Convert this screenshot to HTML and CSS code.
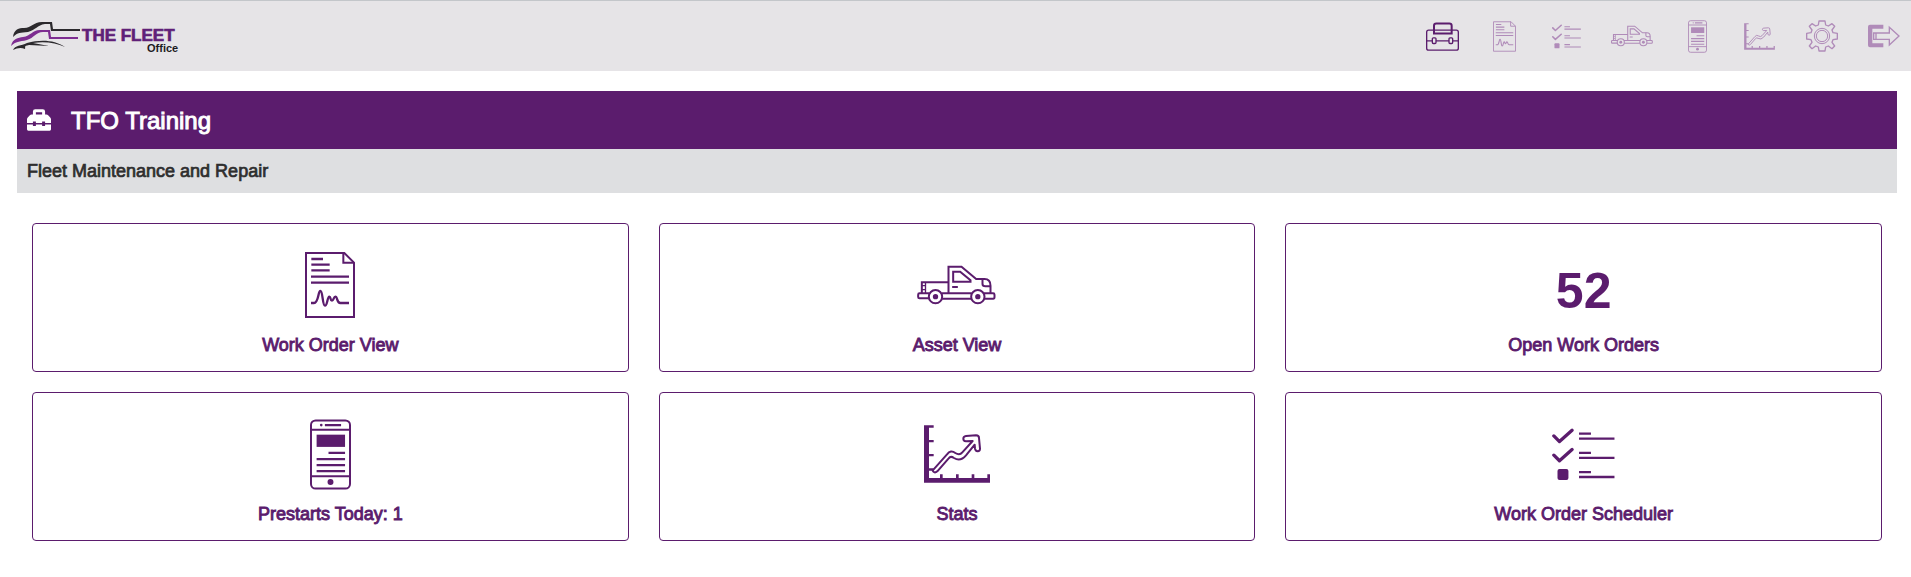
FILE: index.html
```html
<!DOCTYPE html>
<html lang="en">
<head>
<meta charset="utf-8">
<title>The Fleet Office</title>
<link rel="stylesheet" href="styles.css">
</head>
<body>
<svg class="sprite" aria-hidden="true">
  <symbol id="doc" viewBox="195 66 150 198">
    <g fill="none" stroke="currentColor" stroke-width="6">
      <path d="M198 69H313L342 98V261H198Z"/>
      <path d="M310 69V98H342" stroke-width="6"/>
      <path stroke-width="7" d="M214 87H249M214 104H269M214 121H269M213 140H327M213 158H327"/>
      <path stroke-width="7" d="M213 219H222C236 219 234 183 241 183C249 183 247 227 255 227C262 227 262 200 268 200C273 200 270 212 276 212C281 212 281 200 286 200C293 200 290 219 301 219H327"/>
    </g>
  </symbol>
  <symbol id="truck" viewBox="114 104 236 120">
    <g fill="none" stroke="currentColor" stroke-width="6">
      <path d="M128 188V156H208M208 188V109H247L291 146H316C328 146 334 154 334 166V188"/>
      <path d="M222 124H243L274 150V154H222ZM310 146V161C310 165 314 168 319 168H334M219 170H236"/>
      <path d="M128 166H139V156M128 178H139V166M139 178V188" stroke-width="4"/>
      <path d="M149 204H121Q117 204 117 200V193Q117 189 121 189H151M187 189H278M189 205H276M314 189H342Q346 189 346 193V200Q346 205 342 205H317"/>
      <circle cx="169" cy="199" r="20"/>
      <circle cx="296" cy="199" r="20"/>
    </g>
    <circle cx="169" cy="199" r="8" fill="currentColor"/>
    <circle cx="296" cy="199" r="8" fill="currentColor"/>
  </symbol>
  <symbol id="phone" viewBox="208 56 124 212">
    <g fill="none" stroke="currentColor" stroke-width="6">
      <rect x="211" y="59" width="118" height="206" rx="14"/>
      <path d="M211 87H329M211 228H329"/>
      <path d="M264 157H314M228 176H314M228 194H314M228 212H314M253 73H302" stroke-width="7"/>
    </g>
    <g fill="currentColor">
      <rect x="228" y="102" width="86" height="37"/>
      <circle cx="242" cy="73" r="4"/>
      <circle cx="270" cy="245" r="9"/>
    </g>
  </symbol>
  <symbol id="chart" viewBox="132 74 198 174">
    <path fill="currentColor" d="M132 75H161V82H147V119H161V126H147V161H161V168H147V204H161V211H147V233H180V222H188V233H228V222H236V233H275V222H283V233H322V222H330V247H132Z"/>
    <path fill="none" stroke="currentColor" stroke-width="6" stroke-linejoin="round" d="M161 207L201 162Q212 147 226 158Q239 166 247 156L278 122L258 123Q250 122 250 115Q250 108 258 107L288 105Q297 105 297 113L300 145Q300 152 293 153Q286 152 285 145L284 133L258 165Q241 185 222 173Q212 166 206 174L172 213Q165 219 160 214Q156 210 161 207Z"/>
  </symbol>
  <symbol id="list" viewBox="218 80 189 160">
    <g fill="none" stroke="currentColor">
      <path stroke-width="10" stroke-linecap="round" stroke-linejoin="round" d="M223 104L240 121L278 87M223 162L240 179L278 145"/>
      <path stroke-width="7" d="M299 97H335M299 112H406M299 155H335M299 170H406M299 213H335M299 228H406"/>
    </g>
    <rect x="234" y="204" width="33" height="33" rx="6" fill="currentColor"/>
  </symbol>
  <symbol id="case" viewBox="48 68 99 86">
    <g fill="none" stroke="currentColor" stroke-width="4">
      <rect x="50" y="92" width="95" height="60" rx="6"/>
      <path d="M50 124H67M78 124H117M128 124H145"/>
      <rect x="67" y="115" width="11" height="17" rx="3"/>
      <rect x="117" y="115" width="11" height="17" rx="3"/>
      <path stroke-width="6" d="M72 102V79Q72 72 79 72H118Q125 72 125 79V102Z"/>
    </g>
  </symbol>
  <symbol id="gear" viewBox="-48 -48 96 96">
    <g fill="none" stroke="currentColor" stroke-width="4" stroke-linejoin="round">
      <path d="M-9-45H9L11-33L19-30L30-37L38-29L30-18L33-10L46-8V9L33 11L30 19L38 30L30 38L19 30L11 33L9 45H-9L-11 33L-19 30L-30 38L-38 30L-30 19L-33 11L-46 9V-8L-33-10L-30-18L-38-29L-30-37L-19-30L-11-33Z"/>
      <circle r="23" stroke-width="3"/>
      <circle r="17" stroke-width="3"/>
    </g>
  </symbol>
  <symbol id="exit" viewBox="638 74 96 70">
    <path fill="currentColor" d="M684 75V87H651V131H684V143H644Q638 143 638 137V81Q638 75 644 75Z"/>
    <path fill="none" stroke="currentColor" stroke-width="4" d="M655 100H702V83L731 109L702 136V119H655ZM662 100V119"/>
  </symbol>
  <symbol id="toolbox" viewBox="80 87 73 65">
    <path fill="currentColor" fill-rule="evenodd" d="M98 103V94Q98 87 105 87H128Q135 87 135 94V103H139Q142 103 145 106L150 111Q153 114 153 117V129H135V124H126V129H107V124H98V129H80V117Q80 114 83 111L88 106Q91 103 94 103ZM107 103H126V96H107ZM80 133H98V138H107V133H126V138H135V133H153V148Q153 152 149 152H84Q80 152 80 148Z"/>
  </symbol>
</svg>

<header class="topbar">
  <a class="logo" href="#" aria-label="The Fleet Office">
    <svg width="172" height="40" viewBox="0 -2 172 40">
      <g fill="#2b292d">
        <path d="M3 19C4 11 9 10 14 10C22 10 23 4 32 4H42L43 11H70V13H41L40 6H35C27 7 26 12 18 14C10 15 8 14 3 19Z"/>
        <path d="M3 32C5 27 11 28 17 25C31 21 45 22 55 29C46 25 35 23 23 25L39 28L19 27C13 28 16 29 15 31C11 29 7 30 3 32Z"/>
      </g>
      <path fill="#7d2d91" d="M1 28C3 20 8 20 13 19C21 18 22 12 30 12H40L41 19H68V21H39L38 14H33C26 14 24 20 17 22C9 24 6 23 1 28Z"/>
      <text class="logo-name" x="72" y="23">THE FLEET</text>
      <text class="logo-sub" x="137" y="34">Office</text>
    </svg>
  </a>
  <nav class="nav" aria-label="Main">
    <a class="nav-link active" href="#" aria-label="Maintenance"><svg width="33" height="29"><use href="#case"/></svg></a>
    <a class="nav-link" href="#" aria-label="Work orders"><svg width="23" height="31"><use href="#doc"/></svg></a>
    <a class="nav-link" href="#" aria-label="Scheduler"><svg width="29" height="25"><use href="#list"/></svg></a>
    <a class="nav-link wide" href="#" aria-label="Assets"><svg width="42" height="22"><use href="#truck"/></svg></a>
    <a class="nav-link" href="#" aria-label="Prestarts"><svg width="19" height="33"><use href="#phone"/></svg></a>
    <a class="nav-link" href="#" aria-label="Stats"><svg width="31" height="27"><use href="#chart"/></svg></a>
    <a class="nav-link" href="#" aria-label="Settings"><svg width="32" height="32"><use href="#gear"/></svg></a>
    <a class="nav-link" href="#" aria-label="Log out"><svg width="32" height="24"><use href="#exit"/></svg></a>
  </nav>
</header>

<main class="page">
  <div class="title-bar">
    <svg width="24" height="22" aria-hidden="true"><use href="#toolbox"/></svg>
    <h1 class="title">TFO Training</h1>
  </div>
  <h2 class="subtitle">Fleet Maintenance and Repair</h2>
  <div class="cards">
    <a class="card" href="#"><span class="figure"><svg width="50" height="66"><use href="#doc"/></svg></span><span class="label">Work Order View</span></a>
    <a class="card" href="#"><span class="figure"><svg width="79" height="40"><use href="#truck"/></svg></span><span class="label">Asset View</span></a>
    <a class="card" href="#"><span class="figure count">52</span><span class="label">Open Work Orders</span></a>
    <a class="card" href="#"><span class="figure"><svg width="41" height="71"><use href="#phone"/></svg></span><span class="label">Prestarts Today: 1</span></a>
    <a class="card" href="#"><span class="figure"><svg width="66" height="58"><use href="#chart"/></svg></span><span class="label">Stats</span></a>
    <a class="card" href="#"><span class="figure"><svg width="63" height="53"><use href="#list"/></svg></span><span class="label">Work Order Scheduler</span></a>
  </div>
</main>
</body>
</html>
```

FILE: styles.css
```css
* { box-sizing: border-box; }

body {
  margin: 0;
  background: #fff;
  color: #2e2e2e;
  font-family: "Liberation Sans", Arial, sans-serif;
}

svg { display: block; }

.sprite {
  position: absolute;
  width: 0;
  height: 0;
}

.topbar {
  display: flex;
  align-items: center;
  justify-content: space-between;
  height: 71px;
  padding: 0 10px;
  border-top: 1px solid #c3c6ca;
  background: #e6e4e7;
}

.logo-name {
  font-size: 17px;
  font-weight: bold;
  fill: #5f2078;
  stroke: #5f2078;
  stroke-width: 0.04em;
}

.logo-sub {
  font-size: 11px;
  font-weight: bold;
  fill: #1d1b1f;
}

.nav {
  display: flex;
  align-items: center;
  gap: 27px;
}

.nav-link {
  display: flex;
  justify-content: center;
  width: 35px;
  color: #7b348c;
}

.nav-link svg { opacity: 0.5; }
.nav-link.active { color: #5b1c6d; }
.nav-link.active svg { opacity: 1; }
.nav-link.wide { width: 42px; }

.page { padding: 20px 14px 36px 17px; }

.title-bar {
  display: flex;
  align-items: center;
  gap: 20px;
  height: 58px;
  padding: 0 10px;
  background: #5b1c6d;
  color: #fff;
}

.title,
.subtitle {
  margin: 0;
  font-weight: normal;
  -webkit-text-stroke: 0.04em currentColor;
}

.title {
  padding-top: 2px;
  font-size: 24px;
  line-height: 28px;
}

.subtitle {
  padding: 10px;
  background: #dedfe1;
  font-size: 18px;
  line-height: 24px;
}

.cards {
  display: grid;
  grid-template-columns: repeat(3, 1fr);
  gap: 20px 30px;
  padding: 30px 15px 0;
}

.card {
  display: flex;
  flex-direction: column;
  align-items: center;
  gap: 10px;
  padding: 23px 10px 14px;
  border: 1px solid #5b1c6d;
  border-radius: 4px;
  color: #5b1c6d;
  text-decoration: none;
}

.figure {
  display: flex;
  align-items: center;
  height: 76px;
}

.count {
  padding-top: 12px;
  font-size: 50px;
  font-weight: bold;
}

.label {
  font-size: 18px;
  line-height: 24px;
  -webkit-text-stroke: 0.05em currentColor;
}
```
